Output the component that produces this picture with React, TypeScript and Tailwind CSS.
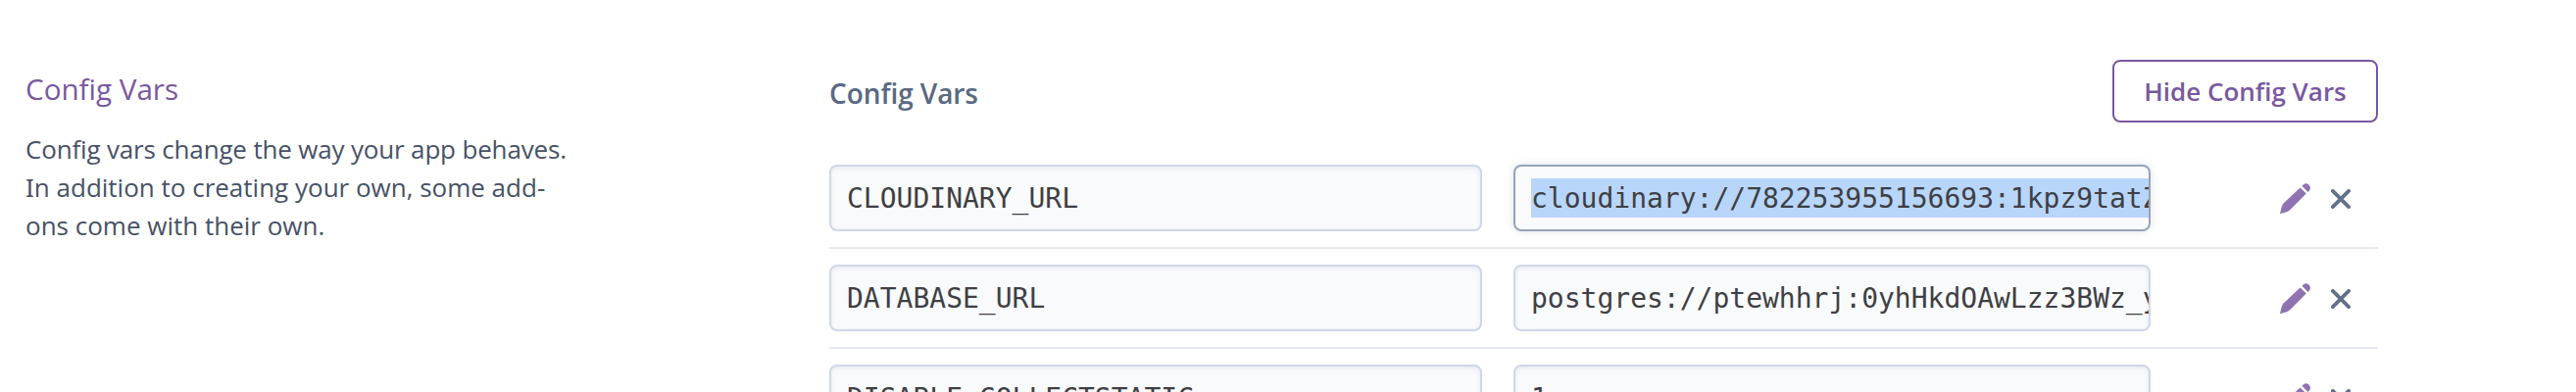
import React from "react";

const rows = [
  { name: "CLOUDINARY_URL", value: "cloudinary://782253955156693:1kpz9tatZ", selected: true },
  { name: "DATABASE_URL", value: "postgres://ptewhhrj:0yhHkdOAwLzz3BWz_y", selected: false },
  { name: "DISABLE_COLLECTSTATIC", value: "1", selected: false },
];

function Pencil() {
  return (
    <svg className="h-8 w-8 shrink-0" viewBox="0 0 32 32">
      <defs>
        <linearGradient id="pencil" x1="0" y1="0" x2="1" y2="1">
          <stop offset="0" stopColor="#9a7cba" />
          <stop offset="1" stopColor="#8468a8" />
        </linearGradient>
      </defs>
      <path
        fill="url(#pencil)"
        d="M0 31.3 1.7 24Q2.3 21.8 3.8 20.3L20.6 4.4 26.8 10.6 10.6 26.8Q9 28.4 6.8 29.2ZM22.4 2.7 23.8 1.4Q26.8-.8 29.6 1.7 32.2 4.6 29.9 7.5L28.6 8.9Z"
      />
    </svg>
  );
}

function Cross() {
  return (
    <svg className="h-5 w-5 shrink-0" viewBox="0 0 20 20">
      <path d="M1.9 1.9 18.1 18.1M18.1 1.9 1.9 18.1" fill="none" stroke="#62718a" strokeWidth="3.8" strokeLinecap="round" />
    </svg>
  );
}

const field =
  "h-[68px] shrink-0 overflow-hidden whitespace-nowrap rounded-lg border-2 bg-[#f9fafc] pl-4 flex items-center font-['DejaVu_Sans_Mono',monospace] text-[28px] text-[#3f3f44]";

export default function App() {
  return (
    <div className="flex h-[400px] w-[2628px] overflow-hidden bg-white font-['Open_Sans',sans-serif]">
      <aside className="w-[846px] shrink-0 pl-[26px] pt-[71px]">
        <h2 className="whitespace-nowrap text-[29.6px] leading-10 text-[#79589f]">Config Vars</h2>
        <p className="mt-[22px] whitespace-nowrap text-[26px] leading-[39px] text-[#475266]">
          <span className="tracking-[-0.17px]">Config vars change the way your app behaves.</span>
          <br />
          <span className="font-['Noto_Sans',sans-serif]">I</span>n addition to creating your own, some add-
          <br />
          ons come with their own.
        </p>
      </aside>
      <main className="w-[1580px] shrink-0">
        <header className="flex h-[152px] items-start justify-between pt-[61px]">
          <h3 className="mt-3.5 whitespace-nowrap text-[28px] font-semibold leading-10 tracking-[-0.08px] text-[#596981]">Config Vars</h3>
          <button className="flex h-16 w-[271px] items-center justify-center whitespace-nowrap rounded-lg border-2 border-[#79589f] text-[26px] font-semibold text-[#79589f]">
            Hide Config Vars
          </button>
        </header>
        {rows.map((row) => (
          <div key={row.name} className="flex h-[102px] items-center border-b-2 border-[#e6eaf0]">
            <div className={field + " w-[666px] border-[#cfd7e6] shadow-[inset_0_2px_4px_#e6eaf3]"}>
              <span className="block h-10 leading-[42px]">{row.name}</span>
            </div>
            <div
              className={
                field +
                " ml-8 w-[650px] " +
                (row.selected
                  ? "border-[#96a3b6] shadow-[0_0_10px_rgba(100,115,140,0.2)]"
                  : "border-[#cfd7e6] shadow-[inset_0_2px_4px_#e6eaf3]")
              }
            >
              <span className={row.selected ? "block h-10 bg-[#b8d6fb] leading-[41px]" : "block h-10 leading-[41px]"}>
                {row.value}
              </span>
            </div>
            <div className="ml-[132px] flex items-center gap-5 pt-0.5">
              <Pencil />
              <Cross />
            </div>
          </div>
        ))}
      </main>
    </div>
  );
}
